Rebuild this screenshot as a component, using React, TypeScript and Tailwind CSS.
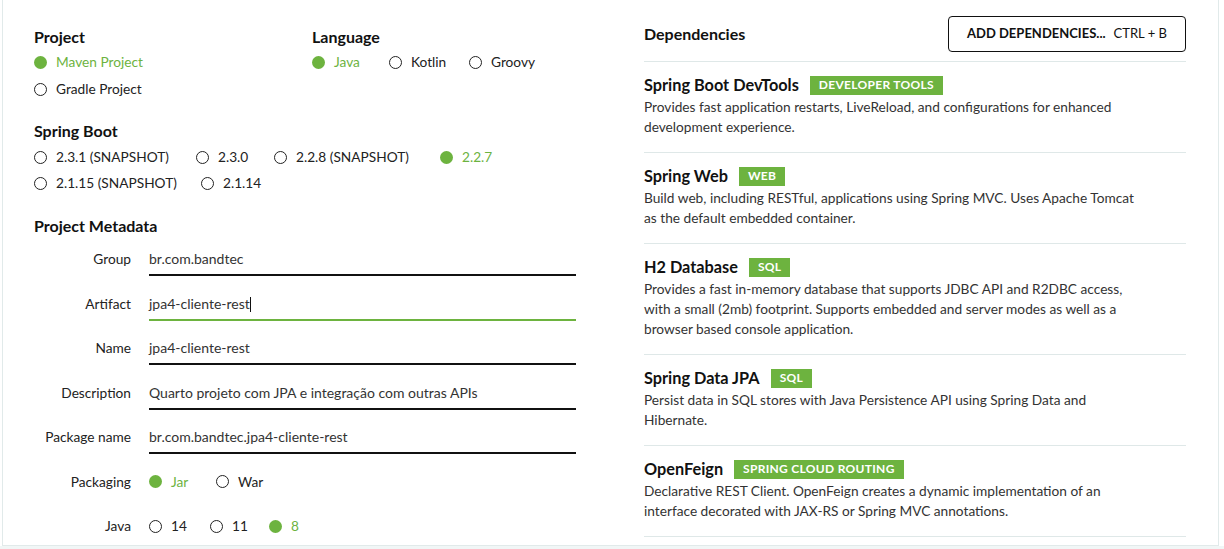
import React from "react";

function Radio({ label, checked }: { label: string; checked?: boolean }) {
  return (
    <div className="flex items-center h-[20px]">
      {checked ? (
        <span className="w-[13px] h-[13px] rounded-full bg-[#6db33f] shrink-0" />
      ) : (
        <span className="w-[13px] h-[13px] rounded-full border-[1.5px] border-[#222] shrink-0" />
      )}
      <span className={"ml-[9px] text-[13.7px] leading-[20px] whitespace-nowrap " + (checked ? "text-[#6db33f]" : "text-[#222]")}>{label}</span>
    </div>
  );
}

function Field({ label, value, active, cursor }: { label: string; value: string; active?: boolean; cursor?: boolean }) {
  return (
    <div className="flex items-start h-[44.5px]">
      <div className="w-[97px] text-right text-[13.7px] leading-[20px] text-[#222] pt-[2px] whitespace-nowrap">{label}</div>
      <div
        className={
          "ml-[18px] w-[427px] pt-[2px] pb-[5px] text-[14px] leading-[20px] text-[#333] border-b-2 whitespace-nowrap " +
          (active ? "border-[#6db33f]" : "border-[#111]")
        }
      >
        {value}
        {cursor && <span className="inline-block w-px h-[15px] bg-[#111] align-[-3px]" />}
      </div>
    </div>
  );
}

function RadioRow({ label, children }: { label: string; children: React.ReactNode }) {
  return (
    <div className="flex items-start h-[44.5px]">
      <div className="w-[97px] text-right text-[13.7px] leading-[20px] text-[#222] pt-[2px]">{label}</div>
      <div className="ml-[18px] pt-[2px] flex">{children}</div>
    </div>
  );
}

function Dep({ name, badge, lines }: { name: string; badge: string; lines: string[] }) {
  return (
    <div className="pt-[13px] pb-[15px] border-b border-[#dfe8e8]">
      <div className="flex items-center h-[20px]">
        <span className="text-[16.3px] font-bold text-[#111] leading-[20px] whitespace-nowrap">{name}</span>
        <span className="ml-[11px] h-[19px] px-[9px] flex items-center bg-[#6db33f] text-white text-[12px] font-bold tracking-[0.3px] whitespace-nowrap">
          {badge}
        </span>
      </div>
      <div className="mt-[2px] text-[13.7px] leading-[20px] text-[#333]">
        {lines.map((l, i) => (
          <div key={i} className="whitespace-nowrap">{l}</div>
        ))}
      </div>
    </div>
  );
}

export default function App() {
  return (
    <div className="w-[1224px] h-[549px] bg-white overflow-hidden font-['Lato','Noto_Sans',sans-serif]">
      <div className="ml-[2px] w-[1217px] h-[546px] border-x border-b border-[#e1eaea] flex bg-white">
        {/* Left column */}
        <div className="w-[641px] pl-[31px] pt-[27px]">
          <div className="flex">
            <div className="w-[278px]">
              <div className="text-[16px] font-bold leading-[20px] text-[#111]">Project</div>
              <div className="mt-[5px] flex flex-col gap-[7px]">
                <Radio label="Maven Project" checked />
                <Radio label="Gradle Project" />
              </div>
            </div>
            <div>
              <div className="text-[16px] font-bold leading-[20px] text-[#111]">Language</div>
              <div className="mt-[5px] flex">
                <div className="w-[77px]"><Radio label="Java" checked /></div>
                <div className="w-[80px]"><Radio label="Kotlin" /></div>
                <Radio label="Groovy" />
              </div>
            </div>
          </div>

          <div className="mt-[22px] text-[16px] font-bold leading-[20px] text-[#111]">Spring Boot</div>
          <div className="mt-[6px] flex">
            <div className="w-[162px]"><Radio label="2.3.1 (SNAPSHOT)" /></div>
            <div className="w-[78px]"><Radio label="2.3.0" /></div>
            <div className="w-[166px]"><Radio label="2.2.8 (SNAPSHOT)" /></div>
            <Radio label="2.2.7" checked />
          </div>
          <div className="mt-[6px] flex">
            <div className="w-[167px]"><Radio label="2.1.15 (SNAPSHOT)" /></div>
            <Radio label="2.1.14" />
          </div>

          <div className="mt-[23px] text-[16px] font-bold leading-[20px] text-[#111]">Project Metadata</div>
          <div className="mt-[11px]">
            <Field label="Group" value="br.com.bandtec" />
            <Field label="Artifact" value="jpa4-cliente-rest" active cursor />
            <Field label="Name" value="jpa4-cliente-rest" />
            <Field label="Description" value="Quarto projeto com JPA e integração com outras APIs" />
            <Field label="Package name" value="br.com.bandtec.jpa4-cliente-rest" />
            <RadioRow label="Packaging">
              <div className="w-[67px]"><Radio label="Jar" checked /></div>
              <Radio label="War" />
            </RadioRow>
            <RadioRow label="Java">
              <div className="w-[61px]"><Radio label="14" /></div>
              <div className="w-[59px]"><Radio label="11" /></div>
              <Radio label="8" checked />
            </RadioRow>
          </div>
        </div>

        {/* Right column */}
        <div className="w-[542px]">
          <div className="pt-[16px] pb-[9px] flex items-center justify-between border-b border-[#dfe8e8]">
            <span className="text-[16px] font-bold text-[#111] leading-[20px]">Dependencies</span>
            <div className="w-[238px] h-[36px] border border-[#111] rounded-[4px] flex items-center justify-center text-[13px] text-[#111]">
              <span className="font-bold">ADD DEPENDENCIES...</span>
              <span className="ml-[8px]">CTRL + B</span>
            </div>
          </div>
          <Dep
            name="Spring Boot DevTools"
            badge="DEVELOPER TOOLS"
            lines={["Provides fast application restarts, LiveReload, and configurations for enhanced", "development experience."]}
          />
          <Dep
            name="Spring Web"
            badge="WEB"
            lines={["Build web, including RESTful, applications using Spring MVC. Uses Apache Tomcat", "as the default embedded container."]}
          />
          <Dep
            name="H2 Database"
            badge="SQL"
            lines={[
              "Provides a fast in-memory database that supports JDBC API and R2DBC access,",
              "with a small (2mb) footprint. Supports embedded and server modes as well as a",
              "browser based console application.",
            ]}
          />
          <Dep
            name="Spring Data JPA"
            badge="SQL"
            lines={["Persist data in SQL stores with Java Persistence API using Spring Data and", "Hibernate."]}
          />
          <Dep
            name="OpenFeign"
            badge="SPRING CLOUD ROUTING"
            lines={["Declarative REST Client. OpenFeign creates a dynamic implementation of an", "interface decorated with JAX-RS or Spring MVC annotations."]}
          />
        </div>
      </div>
      <div className="h-[3px] bg-[#f1f6f6]" />
    </div>
  );
}
